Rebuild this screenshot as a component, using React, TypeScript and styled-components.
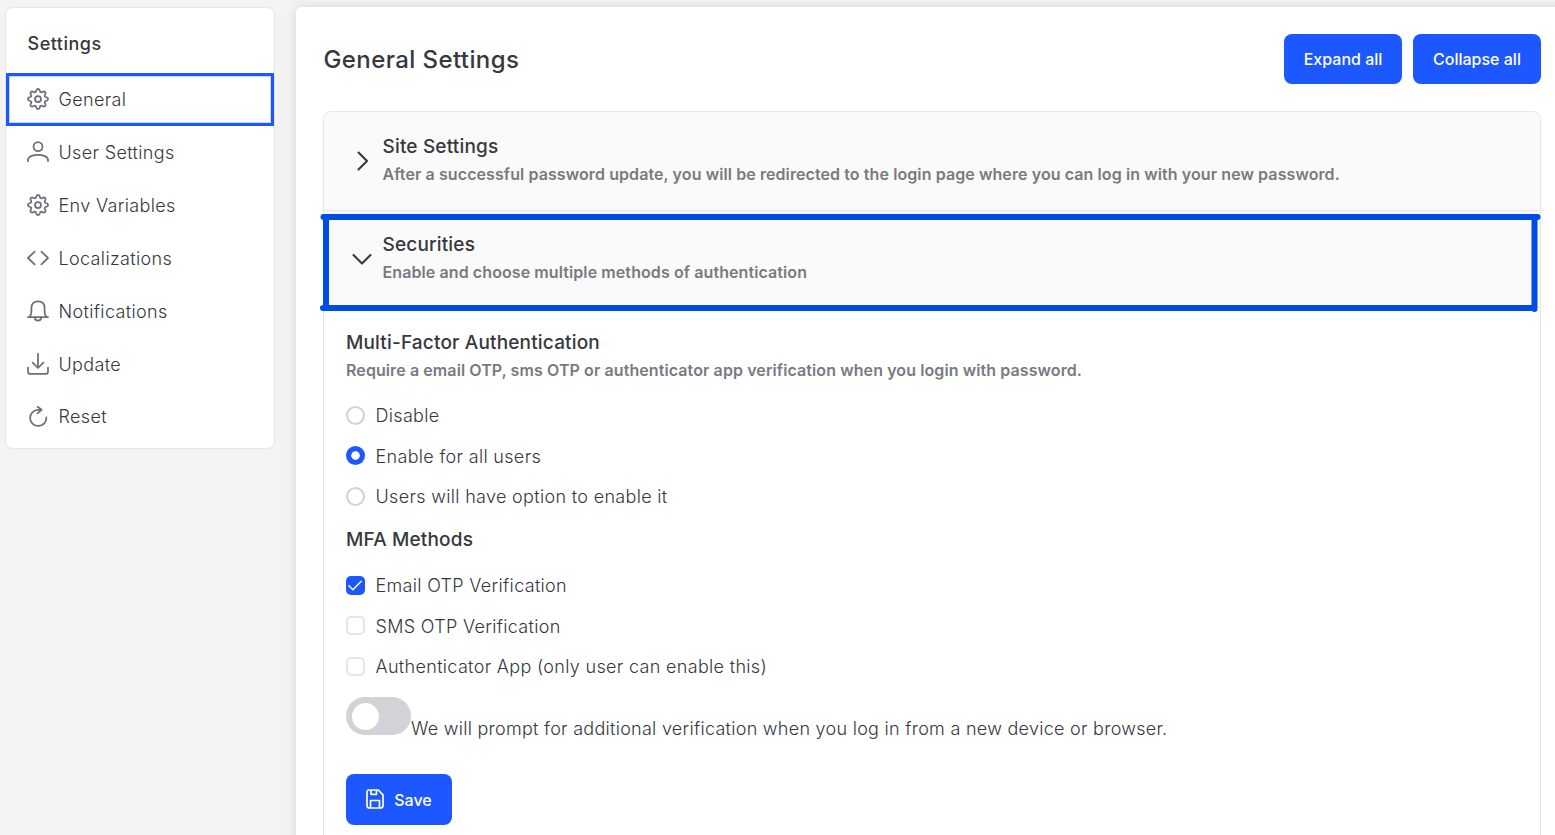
import React from "react";
import styled, { createGlobalStyle } from "styled-components";

const Global = createGlobalStyle`
  *, *::before, *::after { box-sizing: border-box; }
  html, body { margin: 0; height: 100%; overflow: hidden; background: #f3f3f3; }
  body { font-family: Inter, "Liberation Sans", sans-serif; color: #36383d; }
  h1, h2, h3, p, ul { margin: 0; padding: 0; }
`;

const Page = styled.div`
  display: flex;
  align-items: flex-start;
  gap: 21px;
  height: 835px;
  padding: 7px 0 0 5px;
  overflow: hidden;
`;

const Sidebar = styled.nav`
  flex: none;
  width: 270px;
  height: 442px;
  background: #fff;
  border: 1px solid #e5e5e6;
  border-radius: 8px;
`;

const SidebarTitle = styled.h2`
  height: 65px;
  padding: 0 0 0 21.5px;
  font-size: 18px;
  font-weight: 500;
  line-height: 71px;
  letter-spacing: 0.5px;
`;

const NavList = styled.ul`
  display: flex;
  flex-direction: column;
  list-style: none;
`;

const NavItem = styled.li<{ $active?: boolean }>`
  display: flex;
  align-items: center;
  gap: 9.5px;
  height: 52.9px;
  padding-left: ${(p) => (p.$active ? 18 : 21)}px;
  border: ${(p) => (p.$active ? "3px solid #1c57ff" : "none")};
  box-shadow: ${(p) => (p.$active ? "inset 0 0 0 1px #c8d6ff" : "none")};
  font-size: 18px;
  font-weight: 300;
  letter-spacing: 0.35px;
  svg { flex: none; color: #6e7078; }
`;

const NavLabel = styled.span`
  padding-top: 0.3px;
`;

const Main = styled.main`
  flex: none;
  width: 1275px;
  height: 840px;
  padding: 27px 30px 0 27px;
  background: #fff;
  border-radius: 6px;
  box-shadow: 0 0 12px rgba(0, 0, 0, 0.12);
`;

const Header = styled.header`
  display: flex;
  align-items: center;
  gap: 11px;
  height: 50px;
`;

const PageTitle = styled.h1`
  flex: 1;
  padding-left: 0.5px;
  font-size: 24px;
  font-weight: 500;
  letter-spacing: 0.4px;
`;

const Button = styled.button<{ $width: number; $height?: number }>`
  display: flex;
  align-items: center;
  justify-content: center;
  gap: 10px;
  width: ${(p) => p.$width}px;
  height: ${(p) => p.$height ?? 50}px;
  padding: 0;
  border: 0;
  border-radius: 8px;
  background: #1c57ff;
  color: #fff;
  font: 500 16px Inter, sans-serif;
`;

const SaveLabel = styled.span`
  padding-top: 2px;
`;

const Accordion = styled.section`
  width: 1218px;
  height: 760px;
  margin-top: 27px;
  border: 1px solid #e5e5e6;
  border-radius: 8px;
  overflow: hidden;
`;

const Row = styled.div`
  display: flex;
  align-items: center;
  gap: 9.5px;
  height: 98.5px;
  padding-left: 28px;
  background: #fafafa;
  border-bottom: 1px solid #e5e5e6;
  & + & { height: 97.5px; }
`;

const Panel = styled.div`
  padding: 21px 22px;
`;

const Title = styled.h3`
  font-size: 19px;
  font-weight: 500;
  line-height: 28px;
  letter-spacing: 0.17px;
`;

const Description = styled.p`
  color: #787a81;
  font-size: 16px;
  font-weight: 600;
  line-height: 27px;
  letter-spacing: 0.092px;
`;

const Options = styled.div<{ $top: number; $bottom?: number }>`
  display: flex;
  flex-direction: column;
  margin-top: ${(p) => p.$top}px;
  margin-bottom: ${(p) => p.$bottom ?? 0}px;
`;

const Option = styled.label`
  display: flex;
  align-items: center;
  gap: 10.5px;
  height: 40.6px;
  font-size: 18px;
  font-weight: 300;
  letter-spacing: 0.32px;
`;

const OptionLabel = styled.span`
  padding-top: 0.7px;
`;

const Radio = styled.span<{ $on?: boolean }>`
  width: 19px;
  height: 19px;
  border-radius: 50%;
  background: ${(p) => (p.$on ? "radial-gradient(circle, #fff 3.9px, #1c57ff 4.6px)" : "#fff")};
  border: ${(p) => (p.$on ? "none" : "2px solid #d2d2d6")};
`;

const Check = styled.span<{ $on?: boolean }>`
  display: flex;
  width: 19px;
  height: 19px;
  border-radius: 5px;
  background: ${(p) => (p.$on ? "#1c57ff" : "#fff")};
  border: ${(p) => (p.$on ? "none" : "2px solid #e5e5e6")};
`;

const Prompt = styled.div`
  display: flex;
  height: 38px;
  margin-top: 10px;
  font-size: 18px;
  font-weight: 300;
  letter-spacing: 0.275px;
`;

const Toggle = styled.span`
  width: 65px;
  height: 38px;
  padding: 6px;
  border-radius: 19px;
  background: #d2d2d7;
  &::before {
    content: "";
    display: block;
    width: 27px;
    height: 27px;
    border-radius: 50%;
    background: #fff;
  }
`;

const PromptText = styled.span`
  padding-top: 20px;
  line-height: 24px;
`;

const SaveArea = styled.div`
  margin-top: 39px;
`;

const Marker = styled.svg`
  position: absolute;
  left: 315px;
  top: 208px;
  pointer-events: none;
`;

const gearOutline = Array.from({ length: 96 }, (_, i) => {
  const angle = (i / 96) * Math.PI * 2;
  const wave = Math.cos(8 * angle);
  const radius = 8.7 + 1.35 * Math.sign(wave) * Math.pow(Math.abs(wave), 0.7);
  return `${(11 + radius * Math.sin(angle)).toFixed(2)},${(11 - radius * Math.cos(angle)).toFixed(2)}`;
}).join(" ");

const iconShapes: Record<string, React.ReactNode> = {
  gear: (
    <>
      <circle cx="11" cy="11" r="3" />
      <polygon points={gearOutline} />
    </>
  ),
  user: (
    <>
      <circle cx="11" cy="5.6" r="4.5" />
      <path d="M1 20.2v-1.4C1 15.6 6 13.8 11 13.8s10 1.8 10 5v1.4" />
    </>
  ),
  code: <path d="M7.6 4.6 1 11l6.6 6.4M14.4 4.6 21 11l-6.6 6.4" />,
  bell: (
    <>
      <path d="M1 17.2h20" />
      <path d="M2.4 17c1.5-1.5 2-3 2-5V8C4.4 3.7 6.9 1.4 11 1.4S17.6 3.7 17.6 8v4c0 2 .5 3.5 2 5" />
      <path d="M7.8 17.5c0 4 6.4 4 6.4 0" />
    </>
  ),
  download: <path d="M11 .8v14M5.6 9.6 11 15l5.4-5.4M1 14.5v4.2q0 2.2 2.2 2.2h15.6q2.2 0 2.2-2.2v-4.2" />,
  reset: <path d="M13.5 3.8H11a8.1 8.1 0 1 0 8.3 7.6M10.6.8l4 3-4 3.6" />,
};

const Icon = ({ name }: { name: string }) => (
  <svg width="22" height="22" viewBox="0 0 22 22" fill="none" stroke="currentColor" strokeWidth="1.75" strokeLinecap="round" strokeLinejoin="round">
    {iconShapes[name]}
  </svg>
);

const Chevron = ({ open }: { open?: boolean }) => (
  <svg width="21" height="22" viewBox="0 0 21 22" fill="none" stroke="#35373c" strokeWidth="2.1" strokeLinecap="round" strokeLinejoin="round">
    <path d={open ? "M1.5 7 10 15.5 18.5 7" : "M6.5 2.5 15 11 6.5 19.5"} />
  </svg>
);

const items = [
  ["gear", "General"],
  ["user", "User Settings"],
  ["gear", "Env Variables"],
  ["code", "Localizations"],
  ["bell", "Notifications"],
  ["download", "Update"],
  ["reset", "Reset"],
];

export default function App() {
  return (
    <>
      <Global />
      <Page>
        <Sidebar>
          <SidebarTitle>Settings</SidebarTitle>
          <NavList>
            {items.map(([icon, label], i) => (
              <NavItem key={label} $active={i === 0}>
                <Icon name={icon} />
                <NavLabel>{label}</NavLabel>
              </NavItem>
            ))}
          </NavList>
        </Sidebar>
        <Main>
          <Header>
            <PageTitle>General Settings</PageTitle>
            <Button $width={118}>Expand all</Button>
            <Button $width={128}>Collapse all</Button>
          </Header>
          <Accordion>
            <Row>
              <Chevron />
              <div>
                <Title>Site Settings</Title>
                <Description>After a successful password update, you will be redirected to the login page where you can log in with your new password.</Description>
              </div>
            </Row>
            <Row>
              <Chevron open />
              <div>
                <Title>Securities</Title>
                <Description>Enable and choose multiple methods of authentication</Description>
              </div>
            </Row>
            <Panel>
              <Title>Multi-Factor Authentication</Title>
              <Description>Require a email OTP, sms OTP or authenticator app verification when you login with password.</Description>
              <Options $top={11} $bottom={9}>
                <Option><Radio /><OptionLabel>Disable</OptionLabel></Option>
                <Option><Radio $on /><OptionLabel>Enable for all users</OptionLabel></Option>
                <Option><Radio /><OptionLabel>Users will have option to enable it</OptionLabel></Option>
              </Options>
              <Title>MFA Methods</Title>
              <Options $top={11}>
                <Option>
                  <Check $on>
                    <svg width="19" height="19" viewBox="0 0 19 19" fill="none" stroke="#fff" strokeWidth="1.5" strokeLinecap="round" strokeLinejoin="round">
                      <path d="M2.8 9.8 7 13.7 15.2 5.3" />
                    </svg>
                  </Check>
                  <OptionLabel>Email OTP Verification</OptionLabel>
                </Option>
                <Option><Check /><OptionLabel>SMS OTP Verification</OptionLabel></Option>
                <Option><Check /><OptionLabel>Authenticator App (only user can enable this)</OptionLabel></Option>
              </Options>
              <Prompt>
                <Toggle />
                <PromptText>We will prompt for additional verification when you log in from a new device or browser.</PromptText>
              </Prompt>
              <SaveArea>
                <Button $width={106} $height={51}>
                  <svg width="18" height="20" viewBox="0 0 18 20" fill="none" stroke="#fff" strokeWidth="1.7" strokeLinejoin="round">
                    <path d="M3.2 1h9L17 5.8v10.7q0 2.5-2.5 2.5h-11Q1 19 1 16.5V3.2Q1 1 3.200 1ZM4.500 19v-7.500h9V19M5 1.300v4h5.500v-4" />
                  </svg>
                  <SaveLabel>Save</SaveLabel>
                </Button>
              </SaveArea>
            </Panel>
          </Accordion>
        </Main>
      </Page>
      <Marker width="1230" height="110" fill="none" stroke="#004de6" strokeWidth="6" strokeLinecap="round">
        <path d="M8.5 9H1222.500M11 9V100M8 100H1219M1219.500 9V101" />
      </Marker>
    </>
  );
}
